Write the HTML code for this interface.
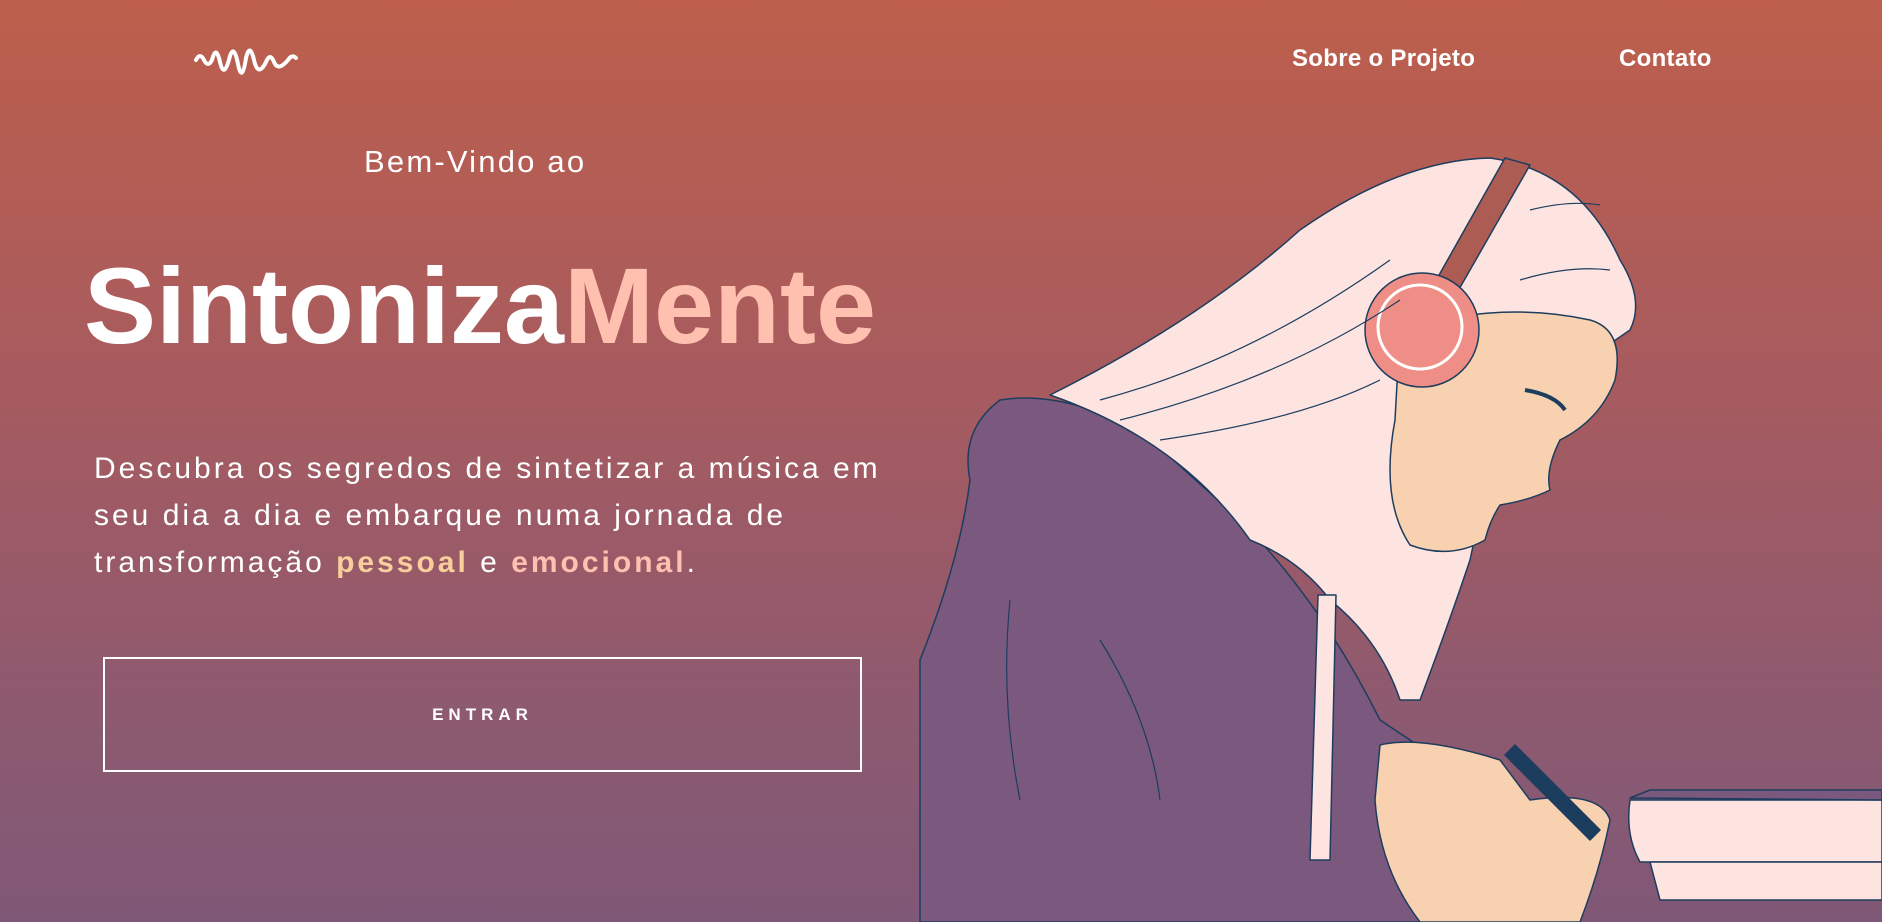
<!DOCTYPE html>
<html><head><meta charset="utf-8"><style>
*{margin:0;padding:0;box-sizing:border-box}
body{width:1882px;height:922px;overflow:hidden;background:linear-gradient(180deg,#bd5f4c 0%,#a85b5e 40%,#8f5a6f 75%,#7f5877 100%);font-family:"Liberation Sans",sans-serif;color:#fff;position:relative}
.nav{position:absolute;top:45px;font-size:24px;font-weight:bold;letter-spacing:0.3px}
.bem{position:absolute;left:364px;top:144px;font-size:31px;font-weight:300;letter-spacing:2.2px}
.title{position:absolute;left:84px;top:243px;font-size:108px;font-weight:bold;letter-spacing:0px;white-space:nowrap}
.title span{color:#ffc0b0}
.p{position:absolute;left:94px;top:445px;width:900px;font-size:30px;line-height:47px;letter-spacing:3px;white-space:nowrap}
.p .a{color:#f8cf9c;font-weight:bold}.p .b{color:#ffc0b0;font-weight:bold}
.btn{position:absolute;left:103px;top:657px;width:759px;height:115px;border:2px solid #fff;display:flex;align-items:center;justify-content:center;font-size:17px;font-weight:bold;letter-spacing:5px}
</style></head><body>
<svg style="position:absolute;left:194px;top:38px" width="110" height="40" viewBox="0 0 110 40"><path d="M2 22 Q6 14 10 22 T18 22 Q22 6 26 24 T36 18 Q40 6 44 26 T52 20 Q56 4 60 22 T72 24 Q76 14 80 24 T94 22 Q98 16 102 20" fill="none" stroke="#fff" stroke-width="4" stroke-linecap="round"/></svg>
<div class="nav" style="left:1292px">Sobre o Projeto</div>
<div class="nav" style="left:1619px">Contato</div>
<div class="bem">Bem-Vindo ao</div>
<div class="title">Sintoniza<span>Mente</span></div>
<div class="p">Descubra os segredos de sintetizar a música em<br>seu dia a dia e embarque numa jornada de<br>transformação <span class="a">pessoal</span> e <span class="b">emocional</span>.</div>
<div class="btn">ENTRAR</div>
<svg style="position:absolute;left:0;top:0" width="1882" height="922" viewBox="0 0 1882 922">
<g stroke="#1d3d5e" stroke-width="1.5" stroke-linejoin="round">
<path d="M920 660 Q960 560 970 480 Q960 430 1000 400 Q1060 390 1140 430 L1240 520 Q1320 600 1380 720 L1440 760 L1440 922 L920 922 Z" fill="#7b597e"/>
<path d="M1050 395 Q1200 320 1300 230 Q1400 160 1490 158 Q1580 170 1620 260 Q1645 300 1630 330 L1500 420 L1470 560 Q1450 620 1420 700 L1400 700 Q1380 640 1330 600 Q1300 560 1250 540 Q1180 440 1050 395 Z" fill="#fde4e1"/>
<path d="M1400 330 Q1500 300 1590 320 Q1625 330 1615 380 Q1600 420 1560 440 Q1545 470 1550 490 Q1530 500 1500 505 Q1490 520 1485 540 Q1450 560 1410 545 Q1380 500 1395 420 Z" fill="#f8d2b0"/>
<path d="M1425 300 L1505 158 L1530 165 L1450 305 Z" fill="#ad5c54"/>
<circle cx="1422" cy="330" r="57" fill="#ee8e86"/>
<circle cx="1420" cy="327" r="42" fill="#ee8e86" stroke="#fff" stroke-width="3"/>
<path d="M1318 595 L1310 860 L1330 860 L1336 595 Z" fill="#fde4e1"/>
<path d="M1380 745 Q1420 735 1500 760 L1530 800 Q1600 790 1610 820 Q1600 870 1580 922 L1420 922 Q1380 870 1375 800 Z" fill="#f8d2b0"/>
<path d="M1515 745 L1600 830 L1590 840 L1505 755 Z" fill="#1d3d5e"/>
<path d="M1630 800 L1882 800 L1882 862 L1640 862 Q1625 835 1630 800 Z" fill="#fde4e1"/>
<path d="M1650 862 L1882 862 L1882 900 L1660 900 Z" fill="#fde4e1"/>
<path d="M1630 798 L1650 790 L1882 790 L1882 800 Z" fill="#7b597e"/>
</g>
<g fill="none" stroke="#1d3d5e" stroke-width="1.2">
<path d="M1100 400 Q1250 360 1390 260"/><path d="M1120 420 Q1280 380 1400 300"/><path d="M1160 440 Q1300 420 1380 380"/>
<path d="M1520 280 Q1570 265 1610 270"/><path d="M1530 210 Q1570 200 1600 205"/>
<path d="M1525 390 Q1555 395 1565 410" stroke-width="4"/>
<path d="M1010 600 Q1000 700 1020 800"/><path d="M1100 640 Q1150 720 1160 800"/>
</g>
</svg>
</body></html>
